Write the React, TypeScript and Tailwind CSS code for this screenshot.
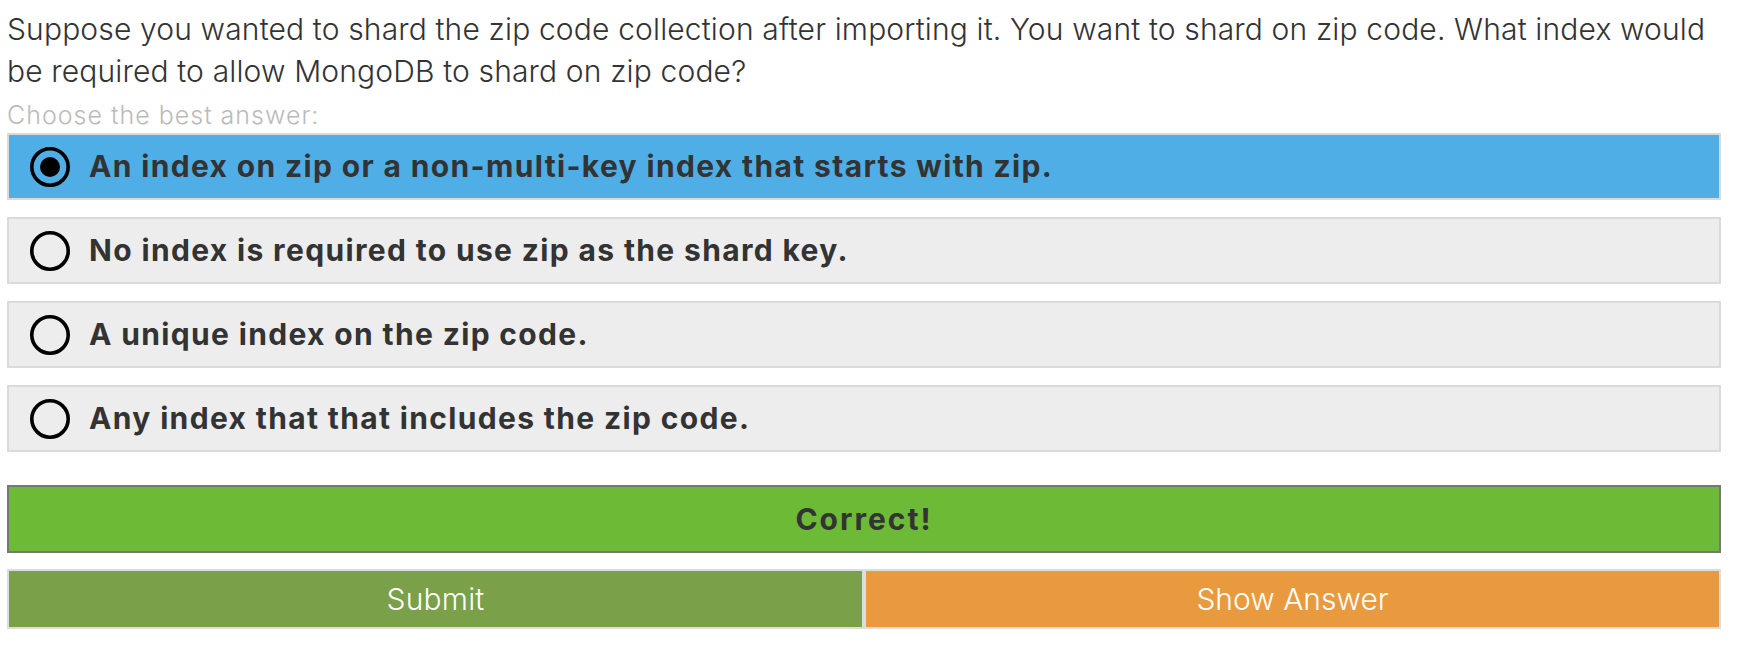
import React from "react";

const options = [
    "An index on zip or a non-multi-key index that starts with zip.",
    "No index is required to use zip as the shard key.",
    "A unique index on the zip code.",
    "Any index that that includes the zip code.",
];

function Radio({ checked }: { checked: boolean }) {
    return (
        <svg width="42" height="42" viewBox="0 0 42 42" className="shrink-0">
            <circle cx="21" cy="21" r="18.2" fill="none" stroke="#000" strokeWidth="3.6" />
            {checked && <circle cx="21" cy="21" r="10" fill="#000" />}
        </svg>
    );
}

export default function App() {
    const selected = 0;

    return (
        <div className="min-h-screen bg-white pl-[7px] pt-[8px] font-['Inter','Liberation_Sans',Arial,sans-serif]">
            <div className="w-[1714px]">
                {/* Question */}
                <p className="font-light text-[30px] leading-[42px] tracking-[0.15px] text-[#333333]">
                    Suppose you wanted to shard the zip code collection after importing it. You want to shard on zip code. What index would be required to allow MongoDB to shard on zip code?
                </p>
                <p className="mt-[5px] font-light text-[25px] leading-[36px] tracking-[1px] text-[#bbbbbb]">
                    Choose the best answer:
                </p>

                {/* Options */}
                <div className="flex flex-col gap-[17px]">
                    {options.map((opt, i) => (
                        <div
                            key={opt}
                            className={`flex h-[67px] items-center gap-[18px] border-2 pl-[20px] ${
                                i === selected ? "bg-[#4faee6] border-[#dadada]" : "bg-[#ededed] border-[#dadada]"
                            }`}
                        >
                            <Radio checked={i === selected} />
                            <span className="font-bold text-[30px] tracking-[1.35px] text-[#333333]">{opt}</span>
                        </div>
                    ))}
                </div>

                {/* Result */}
                <div className="mt-[33px] flex h-[68px] items-center justify-center border-2 border-[#777777] bg-[#6dba36]">
                    <span className="font-bold text-[30px] tracking-[2px] text-[#333333]">Correct!</span>
                </div>

                {/* Buttons */}
                <div className="mt-[16px] flex h-[60px]">
                    <button className="flex w-1/2 items-center justify-center border-2 border-[#dddddd] bg-[#7aa049] font-light text-[30px] tracking-[0.2px] text-white">
                        Submit
                    </button>
                    <button className="flex w-1/2 items-center justify-center border-2 border-[#dddddd] bg-[#e99a3f] font-light text-[30px] text-white">
                        Show Answer
                    </button>
                </div>
            </div>
        </div>
    );
}
